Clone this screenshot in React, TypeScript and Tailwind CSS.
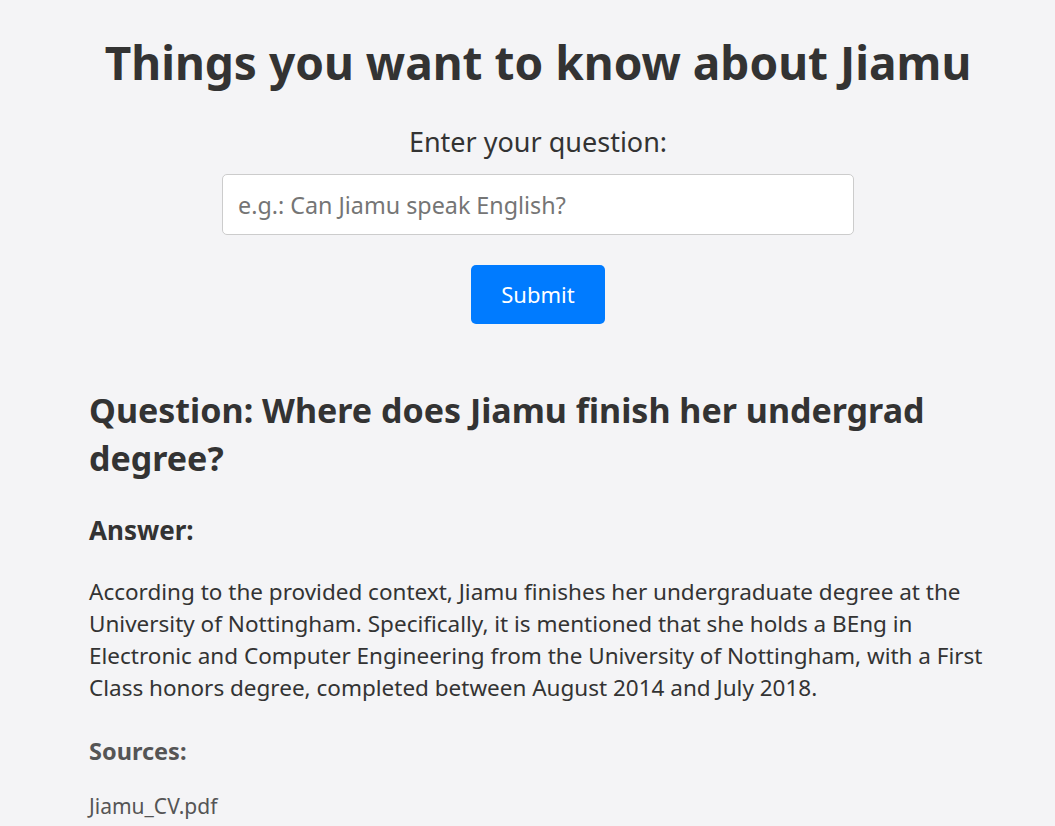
import React from "react";

const App = () => {
    return (
        <div className="min-h-[826px] bg-[#f4f4f6] text-[#333] font-['Noto_Sans',sans-serif] pl-[89px] pr-[68px] pt-[30px]">
            <h1 className="text-center text-[46px] font-bold leading-[64px]">Things you want to know about Jiamu</h1>
            <div className="flex flex-col items-center mt-[30px]">
                <label className="text-[27px] leading-[36px]">Enter your question:</label>
                <input
                    type="text"
                    placeholder="e.g.: Can Jiamu speak English?"
                    className="mt-[14px] w-[632px] h-[61px] bg-white border border-[#ccc] rounded-[5px] px-[15px] text-[23.3px] placeholder:text-[#757575] outline-none"
                />
                <button className="mt-[30px] w-[134px] h-[59px] bg-[#007bff] text-white rounded-[5px] text-[22px]">Submit</button>
            </div>
            <div className="mt-[62px]">
                <h2 className="text-[34px] font-bold leading-[48px]">Question: Where does Jiamu finish her undergrad degree?</h2>
                <h3 className="mt-[30px] text-[26px] font-bold leading-[36px]">Answer:</h3>
                <p className="mt-[28px] mr-[-8px] text-[22.5px] leading-[32px]">
                    According to the provided context, Jiamu finishes her undergraduate degree at the University of Nottingham. Specifically, it is mentioned that she holds a BEng in Electronic and Computer Engineering from the University of Nottingham, with a First Class honors degree, completed between August 2014 and July 2018.
                </p>
                <h4 className="mt-[31px] text-[23.5px] font-bold leading-[32px] text-[#555]">Sources:</h4>
                <p className="mt-[25px] text-[21px] leading-[28px] text-[#555]">Jiamu_CV.pdf</p>
            </div>
        </div>
    );
};

export default App;
